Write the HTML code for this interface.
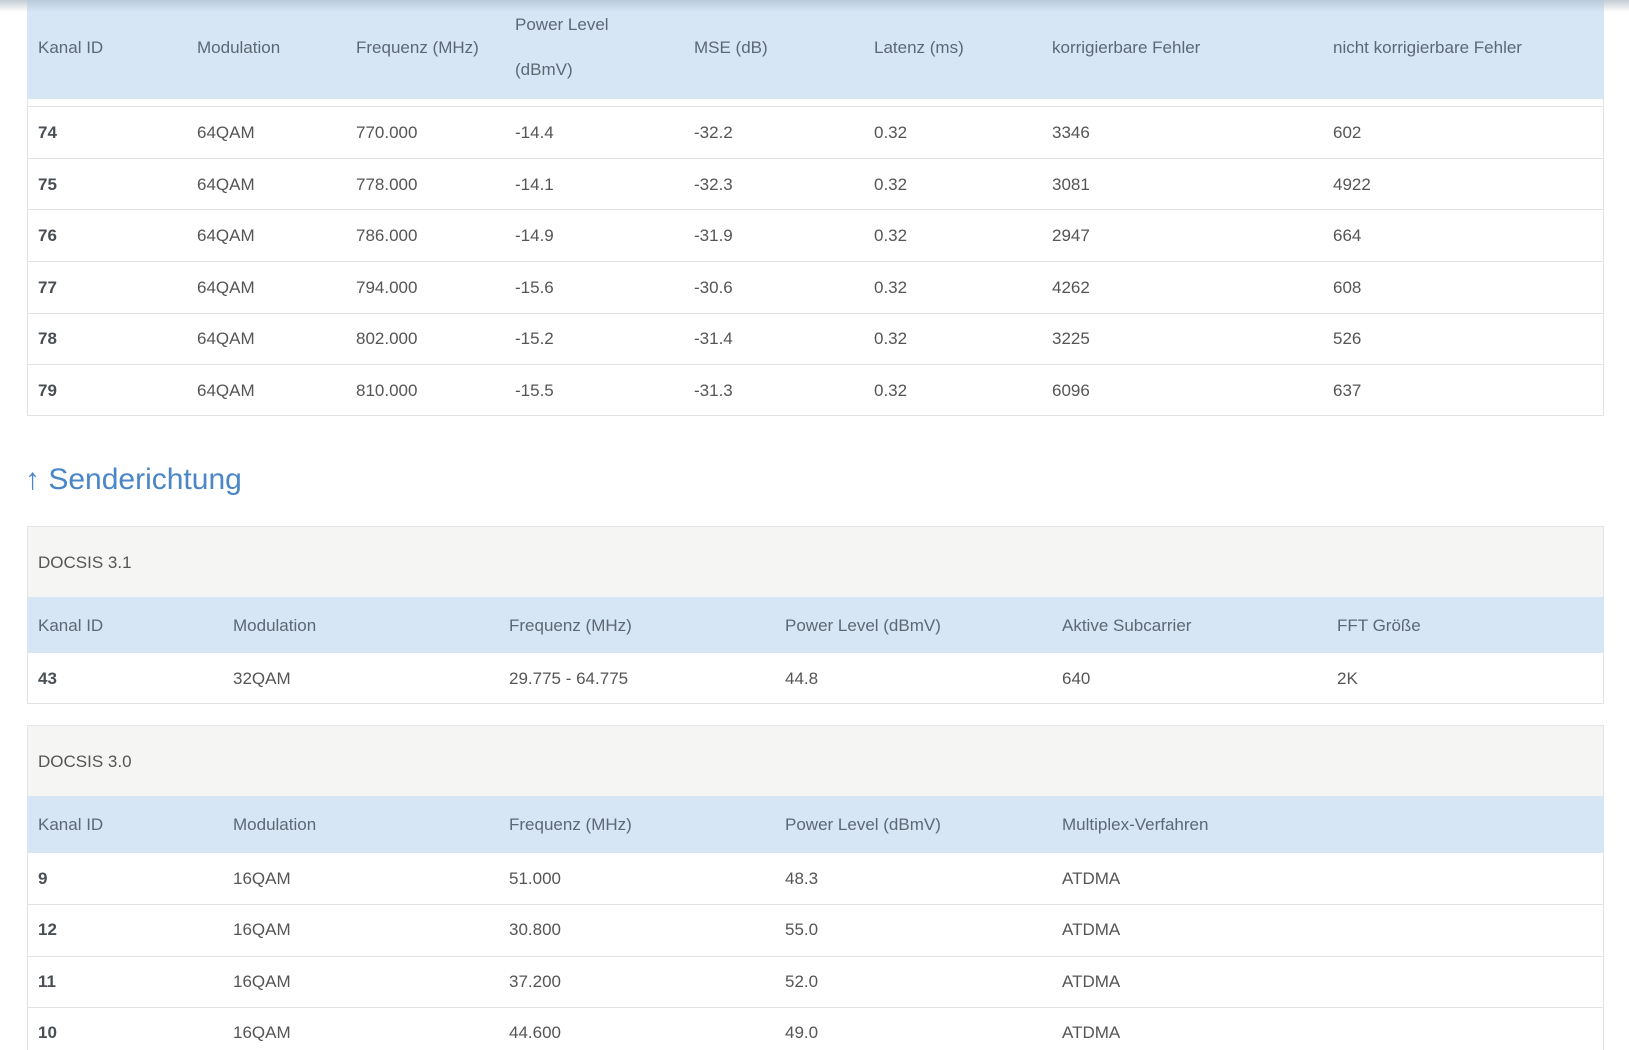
<!DOCTYPE html>
<html style="overflow:hidden;height:1050px"><head><meta charset="utf-8"><style>
*{margin:0;padding:0;box-sizing:border-box}
body{width:1629px;height:1050px;background:#fff;font-family:"Liberation Sans",sans-serif;font-size:17px;color:#555;position:relative;overflow:hidden}
.a{position:absolute;white-space:nowrap}
.hd{position:absolute;left:27px;width:1577px;background:#d6e6f5}
.box{position:absolute;left:27px;width:1577px;border:1px solid #e2e2e2}
.ln{position:absolute;left:27px;width:1577px;height:1px;background:#e2e2e2}
.h{color:#5d6873}
b{font-weight:bold;color:#4a4f55}
.gray{position:absolute;left:27px;width:1577px;background:#f5f5f4;border:1px solid #e4e4e4;border-bottom:none}
</style></head><body>
<div style="position:absolute;left:0;top:0;width:1629px;height:12px;background:linear-gradient(#c4ccd3,rgba(255,255,255,0))"></div>
<div class="hd" style="top:0;height:99px;background:linear-gradient(#b9cad9 0,#d6e6f5 12px)"></div>
<div class="box" style="top:99px;height:317px;border-top:none"></div>
<div class="ln" style="top:106px"></div>
<div class="ln" style="top:158px"></div>
<div class="ln" style="top:209px"></div>
<div class="ln" style="top:261px"></div>
<div class="ln" style="top:313px"></div>
<div class="ln" style="top:364px"></div>

<div class="a h" style="left:38px;top:38px">Kanal ID</div>
<div class="a h" style="left:197px;top:38px">Modulation</div>
<div class="a h" style="left:356px;top:38px">Frequenz (MHz)</div>
<div class="a h" style="left:515px;top:15px">Power Level</div>
<div class="a h" style="left:515px;top:60px">(dBmV)</div>
<div class="a h" style="left:694px;top:38px">MSE (dB)</div>
<div class="a h" style="left:874px;top:38px">Latenz (ms)</div>
<div class="a h" style="left:1052px;top:38px">korrigierbare Fehler</div>
<div class="a h" style="left:1333px;top:38px">nicht korrigierbare Fehler</div>

<div class="a" style="left:25px;top:463px;font-size:30px;color:#4a86c8">↑ Senderichtung</div>

<div class="gray" style="top:526px;height:71px"></div>
<div class="a" style="left:38px;top:553px;color:#555">DOCSIS 3.1</div>
<div class="hd" style="top:597px;height:56px"></div>
<div class="box" style="top:653px;height:51px;border-top:none"></div>
<div class="a h" style="left:38px;top:616px">Kanal ID</div>
<div class="a h" style="left:233px;top:616px">Modulation</div>
<div class="a h" style="left:509px;top:616px">Frequenz (MHz)</div>
<div class="a h" style="left:785px;top:616px">Power Level (dBmV)</div>
<div class="a h" style="left:1062px;top:616px">Aktive Subcarrier</div>
<div class="a h" style="left:1337px;top:616px">FFT Größe</div>
<div class="a" style="left:38px;top:669px"><b>43</b></div>
<div class="a" style="left:233px;top:669px">32QAM</div>
<div class="a" style="left:509px;top:669px">29.775 - 64.775</div>
<div class="a" style="left:785px;top:669px">44.8</div>
<div class="a" style="left:1062px;top:669px">640</div>
<div class="a" style="left:1337px;top:669px">2K</div>

<div class="gray" style="top:725px;height:72px"></div>
<div class="a" style="left:38px;top:752px;color:#555">DOCSIS 3.0</div>
<div class="hd" style="top:796px;height:57px"></div>
<div class="box" style="top:853px;height:200px;border-top:none"></div>
<div class="a h" style="left:38px;top:815px">Kanal ID</div>
<div class="a h" style="left:233px;top:815px">Modulation</div>
<div class="a h" style="left:509px;top:815px">Frequenz (MHz)</div>
<div class="a h" style="left:785px;top:815px">Power Level (dBmV)</div>
<div class="a h" style="left:1062px;top:815px">Multiplex-Verfahren</div>
<div class="ln" style="top:904px"></div>
<div class="ln" style="top:956px"></div>
<div class="ln" style="top:1007px"></div>

<div class="a" style="left:38px;top:869px"><b>9</b></div><div class="a" style="left:233px;top:869px">16QAM</div><div class="a" style="left:509px;top:869px">51.000</div><div class="a" style="left:785px;top:869px">48.3</div><div class="a" style="left:1062px;top:869px">ATDMA</div>
<div class="a" style="left:38px;top:920px"><b>12</b></div><div class="a" style="left:233px;top:920px">16QAM</div><div class="a" style="left:509px;top:920px">30.800</div><div class="a" style="left:785px;top:920px">55.0</div><div class="a" style="left:1062px;top:920px">ATDMA</div>
<div class="a" style="left:38px;top:972px"><b>11</b></div><div class="a" style="left:233px;top:972px">16QAM</div><div class="a" style="left:509px;top:972px">37.200</div><div class="a" style="left:785px;top:972px">52.0</div><div class="a" style="left:1062px;top:972px">ATDMA</div>
<div class="a" style="left:38px;top:1023px"><b>10</b></div><div class="a" style="left:233px;top:1023px">16QAM</div><div class="a" style="left:509px;top:1023px">44.600</div><div class="a" style="left:785px;top:1023px">49.0</div><div class="a" style="left:1062px;top:1023px">ATDMA</div>

<div class="a" style="left:38px;top:123px"><b>74</b></div><div class="a" style="left:197px;top:123px">64QAM</div><div class="a" style="left:356px;top:123px">770.000</div><div class="a" style="left:515px;top:123px">-14.4</div><div class="a" style="left:694px;top:123px">-32.2</div><div class="a" style="left:874px;top:123px">0.32</div><div class="a" style="left:1052px;top:123px">3346</div><div class="a" style="left:1333px;top:123px">602</div>
<div class="a" style="left:38px;top:175px"><b>75</b></div><div class="a" style="left:197px;top:175px">64QAM</div><div class="a" style="left:356px;top:175px">778.000</div><div class="a" style="left:515px;top:175px">-14.1</div><div class="a" style="left:694px;top:175px">-32.3</div><div class="a" style="left:874px;top:175px">0.32</div><div class="a" style="left:1052px;top:175px">3081</div><div class="a" style="left:1333px;top:175px">4922</div>
<div class="a" style="left:38px;top:226px"><b>76</b></div><div class="a" style="left:197px;top:226px">64QAM</div><div class="a" style="left:356px;top:226px">786.000</div><div class="a" style="left:515px;top:226px">-14.9</div><div class="a" style="left:694px;top:226px">-31.9</div><div class="a" style="left:874px;top:226px">0.32</div><div class="a" style="left:1052px;top:226px">2947</div><div class="a" style="left:1333px;top:226px">664</div>
<div class="a" style="left:38px;top:278px"><b>77</b></div><div class="a" style="left:197px;top:278px">64QAM</div><div class="a" style="left:356px;top:278px">794.000</div><div class="a" style="left:515px;top:278px">-15.6</div><div class="a" style="left:694px;top:278px">-30.6</div><div class="a" style="left:874px;top:278px">0.32</div><div class="a" style="left:1052px;top:278px">4262</div><div class="a" style="left:1333px;top:278px">608</div>
<div class="a" style="left:38px;top:329px"><b>78</b></div><div class="a" style="left:197px;top:329px">64QAM</div><div class="a" style="left:356px;top:329px">802.000</div><div class="a" style="left:515px;top:329px">-15.2</div><div class="a" style="left:694px;top:329px">-31.4</div><div class="a" style="left:874px;top:329px">0.32</div><div class="a" style="left:1052px;top:329px">3225</div><div class="a" style="left:1333px;top:329px">526</div>
<div class="a" style="left:38px;top:381px"><b>79</b></div><div class="a" style="left:197px;top:381px">64QAM</div><div class="a" style="left:356px;top:381px">810.000</div><div class="a" style="left:515px;top:381px">-15.5</div><div class="a" style="left:694px;top:381px">-31.3</div><div class="a" style="left:874px;top:381px">0.32</div><div class="a" style="left:1052px;top:381px">6096</div><div class="a" style="left:1333px;top:381px">637</div>
</body></html>
